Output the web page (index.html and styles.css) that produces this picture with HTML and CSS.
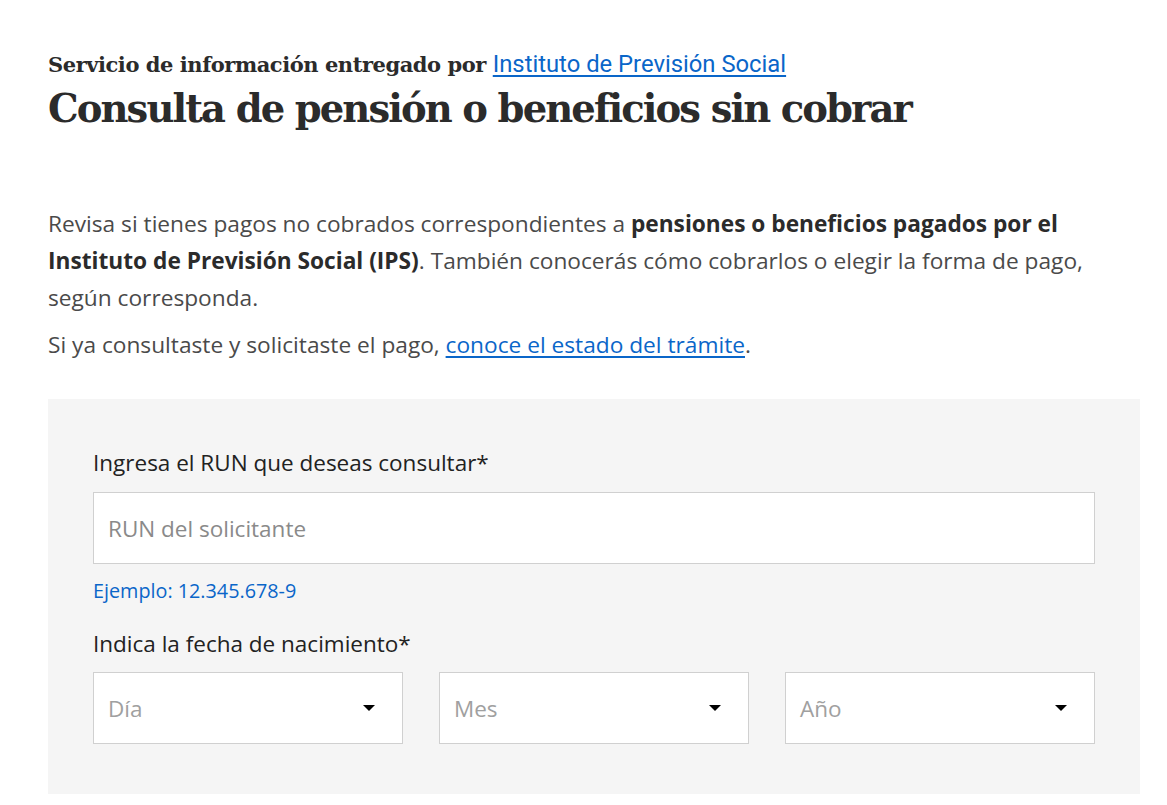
FILE: index.html
```html
<!DOCTYPE html>
<html lang="es">
<head>
<meta charset="utf-8">
<title>Consulta de pensión o beneficios sin cobrar</title>
<link rel="stylesheet" href="styles.css">
</head>
<body>
<main class="page">
  <header class="head">
    <p class="provider">Servicio de información entregado por <a href="#" class="provider-link">Instituto de Previsión Social</a></p>
    <h1 class="title">Consulta de pensión o beneficios sin cobrar</h1>
  </header>
  <section class="intro">
    <p class="lead">Revisa si tienes pagos no cobrados correspondientes a <strong>pensiones o beneficios pagados por el Instituto de Previsión Social (IPS)</strong>. También conocerás cómo cobrarlos o elegir la forma de pago, según corresponda.</p>
    <p class="lead second">Si ya consultaste y solicitaste el pago, <a href="#" class="link">conoce el estado del trámite</a>.</p>
  </section>
  <form class="form-box">
    <label class="label" for="run">Ingresa el RUN que deseas consultar*</label>
    <div class="input"><span class="placeholder">RUN del solicitante</span></div>
    <p class="hint">Ejemplo: 12.345.678-9</p>
    <p class="label label-date">Indica la fecha de nacimiento*</p>
    <div class="selects">
      <div class="select"><span class="placeholder">Día</span><span class="caret"></span></div>
      <div class="select"><span class="placeholder">Mes</span><span class="caret"></span></div>
      <div class="select"><span class="placeholder">Año</span><span class="caret"></span></div>
    </div>
  </form>
</main>
</body>
</html>
```

FILE: styles.css
```css
* { box-sizing: border-box; }
html, body { margin: 0; padding: 0; background: #fff; }
body { font-family: "Open Sans", "Noto Sans", sans-serif; color: #4a4a4a; }
.page { width: 1092px; margin-left: 48px; padding-top: 49px; }
.head { margin: 0; }
.provider {
  margin: 0;
  font-family: "DejaVu Serif", serif;
  font-weight: bold;
  font-size: 21px;
  line-height: 30px;
  color: #2b2b2b;
  letter-spacing: -0.45px;
}
.provider-link {
  font-family: Roboto, sans-serif;
  font-weight: 400;
  font-size: 23.8px;
  color: #0a66c9;
  text-decoration: underline;
  text-underline-offset: 3px;
  letter-spacing: 0;
}
.title {
  margin: 4px 0 0;
  font-family: "DejaVu Serif", serif;
  font-weight: bold;
  font-size: 38.5px;
  line-height: 50px;
  color: #2b2b2b;
  letter-spacing: -1.9px;
}
.intro { margin-top: 71px; }
.lead {
  margin: 0;
  font-size: 22.7px;
  line-height: 37px;
  color: #4a4a4a;
}
.lead strong { color: #2b2b2b; font-weight: 700; }
.lead.second { margin-top: 10px; }
.link { color: #0a66c9; text-decoration: underline; text-underline-offset: 3px; }
.form-box {
  margin-top: 36px;
  background: #f5f5f5;
  padding: 48px 45px 50px;
  height: 395px;
}
.label {
  display: block;
  margin: 0;
  font-size: 22.5px;
  line-height: 32px;
  color: #222;
}
.input {
  margin-top: 13px;
  width: 1002px;
  height: 72px;
  background: #fff;
  border: 1px solid #d0d0d0;
  display: flex;
  align-items: center;
  padding: 0 14px;
}
.placeholder { font-size: 22.5px; color: #8a8a8a; }
.hint {
  margin: 12px 0 0;
  font-size: 19.8px;
  line-height: 30px;
  color: #0a66c9;
}
.label-date { margin-top: 22px; }
.selects {
  margin-top: 12px;
  display: flex;
  gap: 36px;
  width: 1002px;
}
.select {
  flex: 1;
  height: 72px;
  background: #fff;
  border: 1px solid #d0d0d0;
  display: flex;
  align-items: center;
  justify-content: space-between;
  padding: 0 27px 0 14px;
}
.select .placeholder { color: #a0a0a0; }
.caret {
  width: 0; height: 0;
  border-left: 6px solid transparent;
  border-right: 6px solid transparent;
  border-top: 6px solid #000;
}
```
